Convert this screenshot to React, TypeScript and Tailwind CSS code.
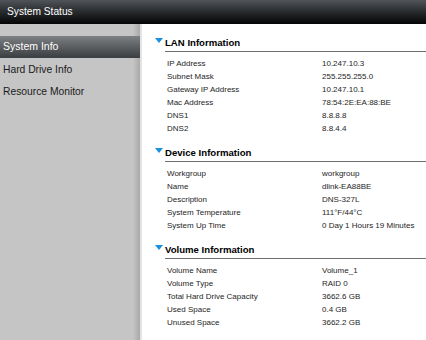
const sections = [
  {
    title: "LAN Information",
    rows: [
      ["IP Address", "10.247.10.3"],
      ["Subnet Mask", "255.255.255.0"],
      ["Gateway IP Address", "10.247.10.1"],
      ["Mac Address", "78:54:2E:EA:88:BE"],
      ["DNS1", "8.8.8.8"],
      ["DNS2", "8.8.4.4"],
    ],
  },
  {
    title: "Device Information",
    rows: [
      ["Workgroup", "workgroup"],
      ["Name", "dlink-EA88BE"],
      ["Description", "DNS-327L"],
      ["System Temperature", "111°F/44°C"],
      ["System Up Time", "0 Day 1 Hours 19 Minutes"],
    ],
  },
  {
    title: "Volume Information",
    rows: [
      ["Volume Name", "Volume_1"],
      ["Volume Type", "RAID 0"],
      ["Total Hard Drive Capacity", "3662.6 GB"],
      ["Used Space", "0.4 GB"],
      ["Unused Space", "3662.2 GB"],
    ],
  },
];

const menu = ["System Info", "Hard Drive Info", "Resource Monitor"];

const Section = ({ title, rows }: { title: string; rows: string[][] }) => (
  <div className="flex flex-col">
    <div className="flex h-[18px] items-start">
      <span className="mt-[4px] ml-[1px] h-0 w-0 border-x-[4.5px] border-t-[5px] border-x-transparent border-t-[#1b8fe0]" />
      <div className="ml-[2px] flex-1 border-b border-[#6f6f6f] text-[9.6px] font-bold leading-[17px] text-black">
        {title}
      </div>
    </div>
    <div className="mt-[5px] flex flex-col pl-[13px]">
      {rows.map(([label, value]) => (
        <div key={label} className="flex h-[13px] items-center text-[8px] leading-[13px] text-[#1e1e1e]">
          <span className="w-[155px]">{label}</span>
          <span>{value}</span>
        </div>
      ))}
    </div>
  </div>
);

export default function App() {
  return (
    <div className="flex h-[340px] w-[426px] flex-col overflow-hidden bg-white font-['Liberation_Sans',Arial,sans-serif]">
      <header className="flex h-[24px] items-center bg-gradient-to-b from-[#50555a] to-[#060606] pl-[7px] text-[10.2px] text-white">
        System Status
      </header>

      <div className="flex flex-1">
        <nav className="flex w-[142px] flex-col border-r-[2px] border-[#e4e4e4] bg-gradient-to-r from-[#c5c5c5] from-[95%] to-[#a9a9a9] pt-[12px]">
          {menu.map((item, i) => (
            <div
              key={item}
              className={
                i === 0
                  ? "flex h-[22px] items-center bg-gradient-to-b from-[#7e8184] to-[#3b3e41] pl-[3px] text-[10.5px] text-white"
                  : "flex h-[22.5px] items-center pl-[3px] text-[10.3px] text-[#1a1a1a]"
              }
            >
              {item}
            </div>
          ))}
        </nav>

        <main className="flex flex-1 flex-col gap-[9px] pt-[10px] pl-[12px]">
          {sections.map((s) => (
            <Section key={s.title} title={s.title} rows={s.rows} />
          ))}
        </main>
      </div>
    </div>
  );
}
